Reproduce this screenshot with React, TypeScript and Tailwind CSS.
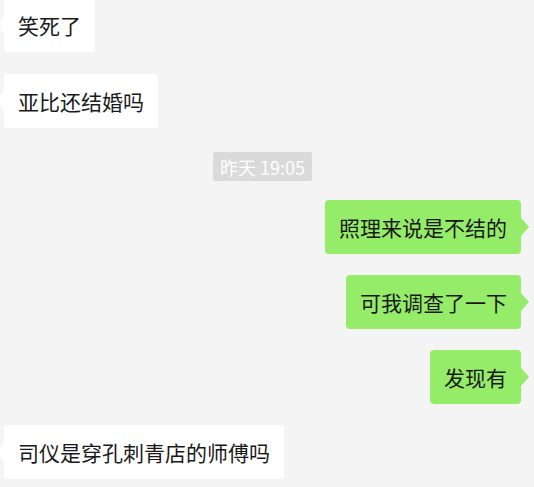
import React from "react";

type Msg =
  | { kind: "in" | "out"; text: string; mt: string }
  | { kind: "time"; text: string; mt: string };

const messages: Msg[] = [
  { kind: "in", text: "笑死了", mt: "-mt-[2px]" },
  { kind: "in", text: "亚比还结婚吗", mt: "mt-[22px]" },
  { kind: "time", text: "昨天 19:05", mt: "mt-[24px]" },
  { kind: "out", text: "照理来说是不结的", mt: "mt-[19px]" },
  { kind: "out", text: "可我调查了一下", mt: "mt-[21px]" },
  { kind: "out", text: "发现有", mt: "mt-[21px]" },
  { kind: "in", text: "司仪是穿孔刺青店的师傅吗", mt: "mt-[21px]" },
];

const Bubble = ({ text, mine }: { text: string; mine: boolean }) => (
  <div
    className={`relative h-[54px] flex items-center rounded-[4px] px-[14px] text-[21px] leading-[30px] text-[#191919] ${
      mine ? "bg-[#95ec69]" : "bg-white"
    }`}
  >
    {/* tail */}
    {mine ? (
      <span className="absolute top-1/2 -right-[8px] -translate-y-1/2 w-0 h-0 border-y-[9px] border-y-transparent border-l-[8px] border-l-[#95ec69]" />
    ) : (
      <span className="absolute top-1/2 -left-[8px] -translate-y-1/2 w-0 h-0 border-y-[9px] border-y-transparent border-r-[8px] border-r-white" />
    )}
    <span className="whitespace-nowrap">{text}</span>
  </div>
);

export default function App() {
  return (
    <div
      className="w-[534px] h-[487px] overflow-hidden bg-[#f4f4f4]"
      style={{ fontFamily: '"Noto Sans CJK SC", "Noto Sans", sans-serif' }}
    >
      <div className="w-[525px] px-[4px] flex flex-col">
        {messages.map((m, i) => {
          if (m.kind === "time") {
            return (
              <div key={i} className={`flex justify-center ${m.mt}`}>
                <span className="h-[29px] flex items-center px-[7px] rounded-[2px] bg-[#dadada] text-white text-[18px] leading-none">
                  {m.text}
                </span>
              </div>
            );
          }
          const mine = m.kind === "out";
          return (
            <div
              key={i}
              className={`flex ${mine ? "justify-end" : "justify-start"} ${m.mt}`}
            >
              <Bubble text={m.text} mine={mine} />
            </div>
          );
        })}
      </div>
    </div>
  );
}
